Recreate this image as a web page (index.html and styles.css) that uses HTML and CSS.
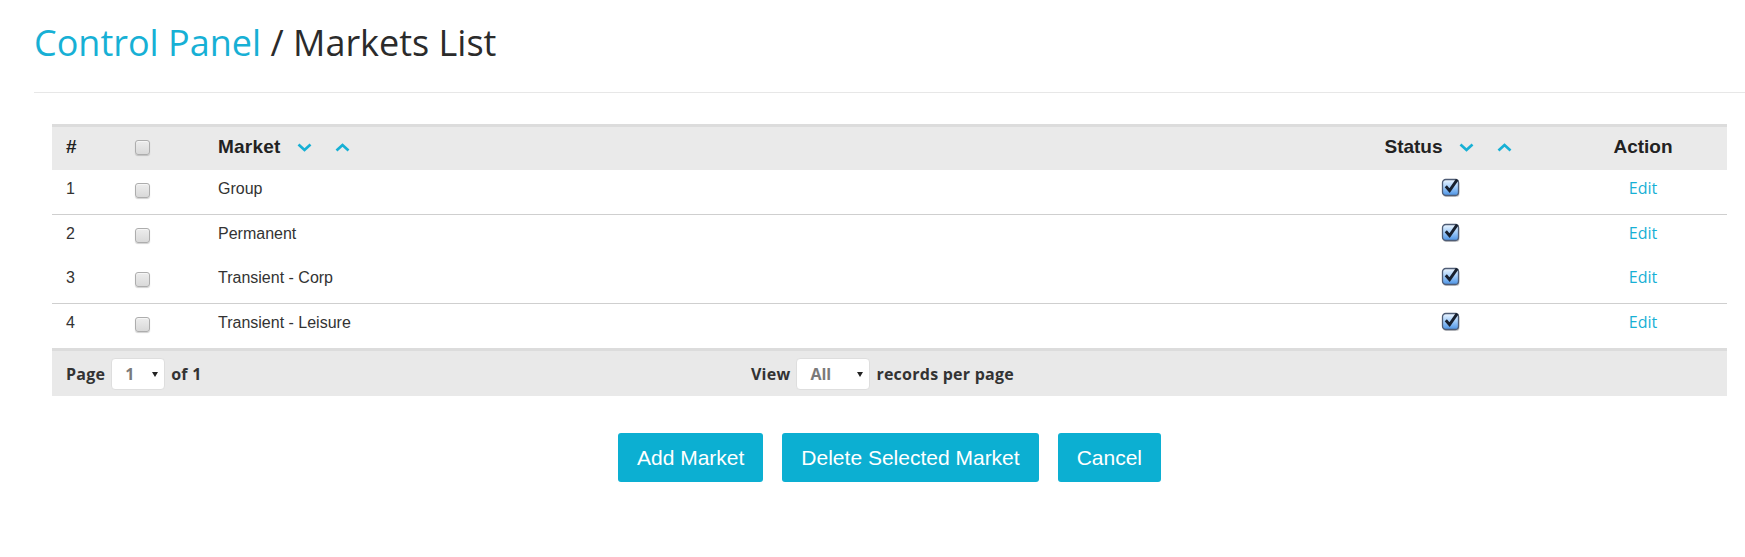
FILE: index.html
```html
<!DOCTYPE html>
<html lang="en">
<head>
<meta charset="utf-8">
<title>Markets List</title>
<link rel="stylesheet" href="styles.css">
</head>
<body>
<header class="page-header">
  <h1 class="page-title"><span class="crumb">Control Panel</span> / Markets List</h1>
</header>

<main class="content">
  <div class="grid" role="table">
    <div class="row head" role="row">
      <div class="c-num" role="columnheader">#</div>
      <div class="c-cb" role="columnheader"><input type="checkbox" class="cbx" aria-label="Select all"></div>
      <div class="c-name" role="columnheader">
        <span>Market</span>
        <svg class="chev chev-down" width="15" height="9" viewBox="0 0 15 9"><polyline points="1.5,1.5 7.5,7 13.5,1.5"/></svg>
        <svg class="chev chev-up" width="15" height="9" viewBox="0 0 15 9"><polyline points="1.5,7.5 7.5,2 13.5,7.5"/></svg>
      </div>
      <div class="c-status" role="columnheader">
        <span>Status</span>
        <svg class="chev chev-down" width="15" height="9" viewBox="0 0 15 9"><polyline points="1.5,1.5 7.5,7 13.5,1.5"/></svg>
        <svg class="chev chev-up" width="15" height="9" viewBox="0 0 15 9"><polyline points="1.5,7.5 7.5,2 13.5,7.5"/></svg>
      </div>
      <div class="c-action" role="columnheader">Action</div>
    </div>

    <div class="row body sep" role="row">
      <div class="c-num" role="cell">1</div>
      <div class="c-cb" role="cell"><input type="checkbox" class="cbx" aria-label="Select Group"></div>
      <div class="c-name" role="cell">Group</div>
      <div class="c-status" role="cell">
        <svg class="checked" width="20" height="21" viewBox="0 0 20 21"><defs><linearGradient id="g1" x1="0" y1="0" x2="0" y2="1"><stop offset="0" stop-color="#eef7ff"/><stop offset="0.45" stop-color="#a8d0fb"/><stop offset="1" stop-color="#4a92e4"/></linearGradient></defs><rect x="2" y="3.5" width="16.5" height="16.5" rx="3.2" fill="#000" opacity="0.2"/><rect x="1.5" y="2.5" width="16" height="16" rx="3.2" fill="url(#g1)" stroke="#4f5d76" stroke-width="1.3"/><path d="M4.8 9.3 L8.6 13.6 L16.2 2.6" fill="none" stroke="#18202e" stroke-width="2.9" stroke-linejoin="miter"/></svg>
      </div>
      <div class="c-action" role="cell"><a href="#" class="edit">Edit</a></div>
    </div>

    <div class="row body" role="row">
      <div class="c-num" role="cell">2</div>
      <div class="c-cb" role="cell"><input type="checkbox" class="cbx" aria-label="Select Permanent"></div>
      <div class="c-name" role="cell">Permanent</div>
      <div class="c-status" role="cell">
        <svg class="checked" width="20" height="21" viewBox="0 0 20 21"><defs><linearGradient id="g2" x1="0" y1="0" x2="0" y2="1"><stop offset="0" stop-color="#eef7ff"/><stop offset="0.45" stop-color="#a8d0fb"/><stop offset="1" stop-color="#4a92e4"/></linearGradient></defs><rect x="2" y="3.5" width="16.5" height="16.5" rx="3.2" fill="#000" opacity="0.2"/><rect x="1.5" y="2.5" width="16" height="16" rx="3.2" fill="url(#g2)" stroke="#4f5d76" stroke-width="1.3"/><path d="M4.8 9.3 L8.6 13.6 L16.2 2.6" fill="none" stroke="#18202e" stroke-width="2.9" stroke-linejoin="miter"/></svg>
      </div>
      <div class="c-action" role="cell"><a href="#" class="edit">Edit</a></div>
    </div>

    <div class="row body sep" role="row">
      <div class="c-num" role="cell">3</div>
      <div class="c-cb" role="cell"><input type="checkbox" class="cbx" aria-label="Select Transient - Corp"></div>
      <div class="c-name" role="cell">Transient - Corp</div>
      <div class="c-status" role="cell">
        <svg class="checked" width="20" height="21" viewBox="0 0 20 21"><defs><linearGradient id="g3" x1="0" y1="0" x2="0" y2="1"><stop offset="0" stop-color="#eef7ff"/><stop offset="0.45" stop-color="#a8d0fb"/><stop offset="1" stop-color="#4a92e4"/></linearGradient></defs><rect x="2" y="3.5" width="16.5" height="16.5" rx="3.2" fill="#000" opacity="0.2"/><rect x="1.5" y="2.5" width="16" height="16" rx="3.2" fill="url(#g3)" stroke="#4f5d76" stroke-width="1.3"/><path d="M4.8 9.3 L8.6 13.6 L16.2 2.6" fill="none" stroke="#18202e" stroke-width="2.9" stroke-linejoin="miter"/></svg>
      </div>
      <div class="c-action" role="cell"><a href="#" class="edit">Edit</a></div>
    </div>

    <div class="row body" role="row">
      <div class="c-num" role="cell">4</div>
      <div class="c-cb" role="cell"><input type="checkbox" class="cbx" aria-label="Select Transient - Leisure"></div>
      <div class="c-name" role="cell">Transient - Leisure</div>
      <div class="c-status" role="cell">
        <svg class="checked" width="20" height="21" viewBox="0 0 20 21"><defs><linearGradient id="g4" x1="0" y1="0" x2="0" y2="1"><stop offset="0" stop-color="#eef7ff"/><stop offset="0.45" stop-color="#a8d0fb"/><stop offset="1" stop-color="#4a92e4"/></linearGradient></defs><rect x="2" y="3.5" width="16.5" height="16.5" rx="3.2" fill="#000" opacity="0.2"/><rect x="1.5" y="2.5" width="16" height="16" rx="3.2" fill="url(#g4)" stroke="#4f5d76" stroke-width="1.3"/><path d="M4.8 9.3 L8.6 13.6 L16.2 2.6" fill="none" stroke="#18202e" stroke-width="2.9" stroke-linejoin="miter"/></svg>
      </div>
      <div class="c-action" role="cell"><a href="#" class="edit">Edit</a></div>
    </div>

    <div class="pager">
      <div class="pager-group">
        <span>Page</span>
        <span class="select select-page"><select aria-label="Page"><option>1</option></select></span>
        <span>of 1</span>
      </div>
      <div class="pager-group pager-center">
        <span>View</span>
        <span class="select select-view"><select aria-label="Records per page"><option>All</option></select></span>
        <span>records per page</span>
      </div>
      <div></div>
    </div>
  </div>

  <div class="actions">
    <button type="button" class="btn">Add Market</button>
    <button type="button" class="btn">Delete Selected Market</button>
    <button type="button" class="btn">Cancel</button>
  </div>
</main>
</body>
</html>
```

FILE: styles.css
```css
* {
  box-sizing: border-box;
}

body {
  margin: 0;
  background: #ffffff;
  color: #333333;
  font-family: "Liberation Sans", Arial, sans-serif;
}

/* Page heading */
.page-header {
  margin-left: 34px;
  padding: 23px 0 29px;
  border-bottom: 1px solid #e7e7e7;
}

.page-title {
  margin: 0;
  font: 400 36px/40px "Open Sans", sans-serif;
  color: #2b2b2b;
}

.page-title .crumb {
  color: #17b0d5;
}

/* Content */
.content {
  padding: 31px 18px 0 52px;
}

.grid {
  border-top: 3px solid #dcdcdc;
}

.row {
  display: grid;
  grid-template-columns: 69px 83px 1fr 222px 168px;
}

.row > div {
  padding-left: 14px;
  padding-right: 14px;
}

/* Header row */
.head {
  height: 43px;
  background: #eaeaea;
  color: #222222;
  font-weight: 700;
  font-size: 19px;
  line-height: 22px;
}

.head > div {
  padding-top: 9px;
}

.head .c-name,
.head .c-status {
  display: flex;
  align-items: center;
  align-self: start;
}

.head .c-name > span {
  letter-spacing: 0.2px;
}

.head .c-status {
  justify-content: center;
}

.head .c-action {
  text-align: center;
}

.head .c-cb {
  padding-top: 13px;
}

.chev {
  display: block;
  fill: none;
  stroke: #17b0d5;
  stroke-width: 2.7;
}

.chev-down {
  margin-left: 16px;
}

.head .c-name .chev-down {
  margin-left: 17px;
}

.chev-up {
  margin-left: 23px;
}

/* Body rows */
.body {
  height: 44px;
  font-size: 16px;
  line-height: 20px;
  color: #333333;
}

.body.sep {
  height: 45px;
  border-bottom: 1px solid #cfcfcf;
}

.body > div {
  padding-top: 9px;
}

.body .c-cb {
  padding-top: 13px;
}

.body .c-status {
  display: flex;
  justify-content: center;
  padding-top: 7px;
  padding-left: 17px;
  padding-right: 11px;
}

.checked {
  display: block;
}

.body .c-action {
  padding-top: 8px;
  text-align: center;
}

.edit {
  font-family: "Open Sans", sans-serif;
  font-size: 16px;
  color: #17b0d5;
  text-decoration: none;
}

/* Unchecked checkbox */
.cbx {
  appearance: none;
  -webkit-appearance: none;
  display: block;
  margin: 0;
  width: 15px;
  height: 15px;
  border: 1px solid #adadad;
  border-radius: 3px;
  background: linear-gradient(#ededed, #d9d9d9);
  box-shadow: 0 1px 1px rgba(0, 0, 0, 0.18), inset 0 1px 0 #f6f6f6;
}

/* Pager */
.pager {
  display: grid;
  grid-template-columns: 1fr auto 1fr;
  align-items: center;
  height: 48px;
  padding: 0 14px;
  border-top: 3px solid #dcdcdc;
  background: #e9e9e9;
  font: 700 16px "Open Sans", sans-serif;
  letter-spacing: 0.25px;
  color: #333333;
}

.pager-group {
  display: flex;
  align-items: center;
  gap: 6px;
}

.pager-center {
  margin-right: 14px;
}

.select {
  position: relative;
  display: inline-flex;
  align-items: center;
  height: 32px;
  background: #ffffff;
  border: 1px solid #dedede;
  border-radius: 4px;
}

.select-page {
  width: 54px;
}

.select-view {
  width: 74px;
}

.select select {
  appearance: none;
  -webkit-appearance: none;
  width: 100%;
  height: 100%;
  border: 0;
  background: transparent;
  padding: 0 0 0 13px;
  font: 700 16px "Open Sans", sans-serif;
  color: #7a7a7a;
  outline: none;
}

.select::after {
  content: "";
  position: absolute;
  right: 6px;
  top: 50%;
  margin-top: -2px;
  border-left: 3.5px solid transparent;
  border-right: 3.5px solid transparent;
  border-top: 5px solid #222222;
  pointer-events: none;
}

/* Buttons */
.actions {
  display: flex;
  justify-content: center;
  gap: 19px;
  margin-top: 37px;
}

.btn {
  height: 49px;
  padding: 0 19px;
  border: 0;
  border-radius: 3px;
  background: #0cafd2;
  color: #ffffff;
  font: 400 21px "Liberation Sans", Arial, sans-serif;
  cursor: pointer;
}
```
